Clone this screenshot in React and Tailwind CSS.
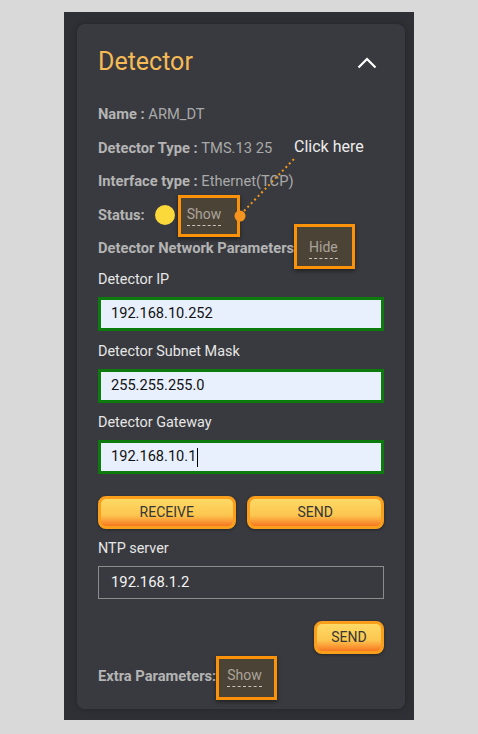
import React from 'react';

const Highlight = ({ children, box }) => (
  <span className="relative inline-block">
    <span className={`absolute border-[3px] border-[#fb9209] bg-[#4c4337] shadow-[0_2px_4px_rgba(0,0,0,0.45)] ${box}`}></span>
    <span className="relative inline-block pb-[2px] border-b border-dashed border-[#c9c4bc] leading-[18px] text-[#aaa49b]">{children}</span>
  </span>
);

const Field = ({ label, value, cursor }) => (
  <div className="flex flex-col">
    <label className="h-[20px] leading-[20px] mb-[7px] text-[14.4px] text-[#e6e6e6]">{label}</label>
    <div className="h-[34px] border-[3px] border-[#0d7a0d] bg-[#e8f0fe] pl-[10px] flex items-center text-[14.6px] text-[#111]">
      {value}
      {cursor && <span className="inline-block w-px h-[19px] bg-black ml-px"></span>}
    </div>
  </div>
);

const OrangeButton = ({ children, className = '' }) => (
  <button className={`h-[33px] rounded-lg border-[3px] border-[#fa9f1c] bg-linear-to-b from-[#fdd965] via-[#fcc64f] via-60% to-[#f57620] text-[14px] text-[#363636] uppercase shadow-[0_1px_3px_rgba(0,0,0,0.4)] ${className}`}>
    {children}
  </button>
);

export default function App() {
  return (
    <div className="w-[478px] h-[734px] bg-[#d9d9d9] pt-[12px] pl-[64px] font-['Roboto','Liberation_Sans',sans-serif]">
      <div className="w-[350px] h-[708px] bg-[#2f3035] pt-[12px] pl-[13px]">
        <div className="relative w-[328px] h-[685px] rounded-lg bg-[#393a3f] px-[21px] pt-[24px] shadow-[0_0_6px_rgba(0,0,0,0.25)]">
          <div className="flex items-center justify-between h-[28px]">
            <h2 className="text-[25px] leading-[28px] text-[#f6bb55]">Detector</h2>
            <svg width="20" height="13" viewBox="0 0 20 13" className="mr-[7px]">
              <polyline points="1.5,11.5 10,3 18.5,11.5" fill="none" stroke="#ffffff" strokeWidth="2.2" />
            </svg>
          </div>

          <div className="mt-[28px] flex flex-col gap-[13.5px] text-[14.7px] leading-[20px]">
            <div>
              <span className="font-bold text-[#b4b4b4]">Name : </span>
              <span className="text-[#a9a9a9]">ARM_DT</span>
            </div>
            <div>
              <span className="font-bold text-[#b4b4b4]">Detector Type : </span>
              <span className="text-[#a9a9a9]">TMS.13 25</span>
            </div>
            <div>
              <span className="font-bold text-[#b4b4b4]">Interface type : </span>
              <span className="text-[#a9a9a9]">Ethernet(TCP)</span>
            </div>
            <div className="flex items-center h-[20px]">
              <span className="font-bold text-[#b4b4b4]">Status:</span>
              <span className="ml-[10px] w-[20px] h-[20px] rounded-full bg-[#fcd93a]"></span>
              <span className="ml-[12px] text-[14px]">
                <Highlight box="-left-[9px] -right-[19px] -top-[9px] -bottom-[11px]">Show</Highlight>
              </span>
            </div>
            <div className="flex items-center h-[20px]">
              <span className="font-bold text-[#b4b4b4]">Detector Network Parameters</span>
              <span className="ml-[15px] text-[14px]">
                <Highlight box="-left-[15px] -right-[17px] -top-[13px] -bottom-[10px]">Hide</Highlight>
              </span>
            </div>
          </div>

          <div className="mt-[12px] flex flex-col gap-[10.5px]">
            <Field label="Detector IP" value="192.168.10.252" />
            <Field label="Detector Subnet Mask" value="255.255.255.0" />
            <Field label="Detector Gateway" value="192.168.10.1" cursor />
          </div>

          <div className="mt-[22px] flex gap-[11px]">
            <OrangeButton className="flex-1">Receive</OrangeButton>
            <OrangeButton className="flex-1">Send</OrangeButton>
          </div>

          <div className="mt-[10px] flex flex-col">
            <label className="h-[20px] leading-[20px] mb-[7px] text-[14.4px] text-[#e6e6e6]">NTP server</label>
            <div className="h-[33px] border border-[#8c8c8c] pl-[12px] flex items-center text-[14.8px] text-[#f4f4f4]">192.168.1.2</div>
          </div>

          <div className="mt-[22px] flex justify-end">
            <OrangeButton className="w-[70px]">Send</OrangeButton>
          </div>

          <div className="mt-[12px] flex items-center h-[20px] text-[14.7px]">
            <span className="font-bold text-[#b4b4b4]">Extra Parameters:</span>
            <span className="ml-[11px] text-[14px]">
              <Highlight box="-left-[11px] -right-[15px] -top-[9px] -bottom-[13px]">Show</Highlight>
            </span>
          </div>

          <span className="absolute left-[217px] top-[113px] text-[16px] leading-[20px] text-[#ececec]">Click here</span>
          <svg className="absolute left-0 top-0 pointer-events-none" width="328" height="260">
            <line x1="167" y1="187" x2="217" y2="135" stroke="#f39a16" strokeWidth="2" strokeDasharray="2 3" />
            <circle cx="163" cy="192" r="5.5" fill="#f7941d" />
          </svg>
        </div>
      </div>
    </div>
  );
}
